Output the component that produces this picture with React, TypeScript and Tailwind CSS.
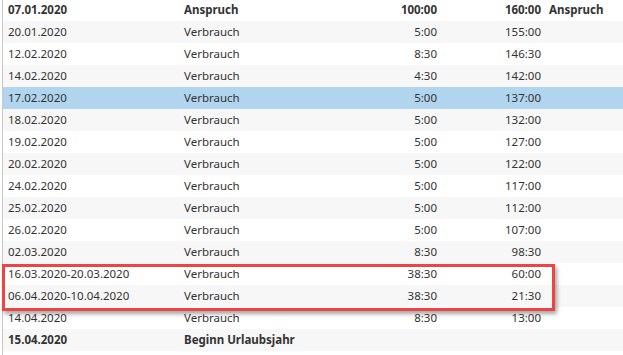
import React from "react";

type Row = { d: string; t: string; a: string; b: string; c?: string; bold?: boolean };

const rows: Row[] = [
  { d: "07.01.2020", t: "Anspruch", a: "100:00", b: "160:00", c: "Anspruch", bold: true },
  { d: "20.01.2020", t: "Verbrauch", a: "5:00", b: "155:00" },
  { d: "12.02.2020", t: "Verbrauch", a: "8:30", b: "146:30" },
  { d: "14.02.2020", t: "Verbrauch", a: "4:30", b: "142:00" },
  { d: "17.02.2020", t: "Verbrauch", a: "5:00", b: "137:00" },
  { d: "18.02.2020", t: "Verbrauch", a: "5:00", b: "132:00" },
  { d: "19.02.2020", t: "Verbrauch", a: "5:00", b: "127:00" },
  { d: "20.02.2020", t: "Verbrauch", a: "5:00", b: "122:00" },
  { d: "24.02.2020", t: "Verbrauch", a: "5:00", b: "117:00" },
  { d: "25.02.2020", t: "Verbrauch", a: "5:00", b: "112:00" },
  { d: "26.02.2020", t: "Verbrauch", a: "5:00", b: "107:00" },
  { d: "02.03.2020", t: "Verbrauch", a: "8:30", b: "98:30" },
  { d: "16.03.2020-20.03.2020", t: "Verbrauch", a: "38:30", b: "60:00" },
  { d: "06.04.2020-10.04.2020", t: "Verbrauch", a: "38:30", b: "21:30" },
  { d: "14.04.2020", t: "Verbrauch", a: "8:30", b: "13:00" },
  { d: "15.04.2020", t: "Beginn Urlaubsjahr", a: "", b: "", bold: true },
];

export default function App() {
  return (
    <div
      className="relative w-[623px] h-[355px] overflow-hidden bg-white text-[#333333] text-[11.5px]"
      style={{ fontFamily: '"Noto Sans", "Open Sans", sans-serif' }}
    >
      <div className="flex flex-col -mt-px ml-[2px] border-l border-[#c8c8c8] h-[357px]">
        {rows.map((r, i) => {
          const bg = i === 4 ? "bg-[#b1d5ef]" : i % 2 === 1 ? "bg-[#f7f7f7]" : "bg-white";
          return (
            <div
              key={i}
              className={`flex items-center h-[22px] shrink-0 ${bg} ${r.bold ? "font-bold" : ""}`}
            >
              <div className="w-[181px] pl-[5px] whitespace-nowrap">{r.d}</div>
              <div className="w-[175px] whitespace-nowrap">{r.t}</div>
              <div className="w-[78px] text-right whitespace-nowrap">{r.a}</div>
              <div className="w-[104px] text-right whitespace-nowrap">{r.b}</div>
              <div className="pl-[8px] whitespace-nowrap">{r.c ?? ""}</div>
            </div>
          );
        })}
      </div>
      <div className="absolute left-[2px] top-[264px] w-[553px] h-[47px] border-[3px] border-[#ee4444] shadow-[2px_3px_4px_rgba(0,0,0,0.35)]" />
    </div>
  );
}
